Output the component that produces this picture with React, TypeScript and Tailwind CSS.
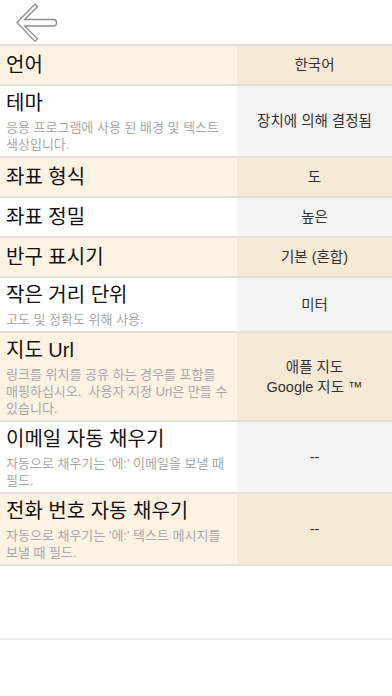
import React from "react";

interface Setting {
  title: string;
  sub?: string;
  value: string[];
}

const settings: Setting[] = [
  { title: "언어", value: ["한국어"] },
  {
    title: "테마",
    sub: "응용 프로그램에 사용 된 배경 및 텍스트 색상입니다.",
    value: ["장치에 의해 결정됨"],
  },
  { title: "좌표 형식", value: ["도"] },
  { title: "좌표 정밀", value: ["높은"] },
  { title: "반구 표시기", value: ["기본 (혼합)"] },
  { title: "작은 거리 단위", sub: "고도 및 정확도 위해 사용.", value: ["미터"] },
  {
    title: "지도 Url",
    sub: "링크를 위치를 공유 하는 경우를 포함를 매핑하십시오.\u00a0 사용자 지정 Url은 만들 수 있습니다.",
    value: ["애플 지도", "Google 지도 ™"],
  },
  {
    title: "이메일 자동 채우기",
    sub: "자동으로 채우기는 '에:' 이메일을 보낼 때 필드.",
    value: ["--"],
  },
  {
    title: "전화 번호 자동 채우기",
    sub: "자동으로 채우기는 '에:' 텍스트 메시지를 보낼 때 필드.",
    value: ["--"],
  },
];

const BackArrow = () => (
  <svg width="60" height="44" viewBox="0 0 60 44" fill="none">
    <path
      d="M17 22.5 L35 4 L37.5 6.8 L24.5 19.5 L54 19.5 Q56.5 19.5 56.5 22.8 Q56.5 26 54 26 L24.5 26 L37.5 38.6 L35 41.4 Z"
      stroke="#8c8c8c"
      strokeWidth="1.3"
      strokeLinejoin="round"
    />
  </svg>
);

const Row = ({ s, tinted }: { s: Setting; tinted: boolean }) => {
  return (
    <div className="flex border-b-2 border-[#e6e2da]">
      <div
        className={`w-[237px] pl-[6px] pr-[6px] flex flex-col ${
          s.sub ? "pt-[3px] pb-[3px]" : "min-h-[38px] justify-center"
        } ${tinted ? "bg-[#fdf3e2]" : "bg-white"}`}
      >
        <p className="text-[20px] leading-[28px] text-[#111]">{s.title}</p>
        {s.sub && (
          <p className="mt-[2px] text-[13px] leading-[17px] text-[#a8a8a8] break-keep">
            {s.sub}
          </p>
        )}
      </div>
      <div
        className={`flex-1 flex flex-col items-center justify-center text-center text-[14.5px] leading-[20px] text-[#333] ${
          tinted ? "bg-[#f6ead7]" : "bg-[#f4f4f4]"
        }`}
      >
        {s.value.map((v) => (
          <span key={v}>{v}</span>
        ))}
      </div>
    </div>
  );
};

export default function App() {
  return (
    <div
      className="w-[392px] h-[696px] overflow-hidden bg-white"
      style={{ fontFamily: '"Liberation Sans", "Noto Sans CJK KR", sans-serif' }}
    >
      <div className="h-[46px] border-b-2 border-[#dddddd]">
        <BackArrow />
      </div>
      {settings.map((s, i) => (
        <Row key={s.title} s={s} tinted={i % 2 === 0} />
      ))}
      <div className="h-[74px] border-b-2 border-[#ececec]" />
    </div>
  );
}
